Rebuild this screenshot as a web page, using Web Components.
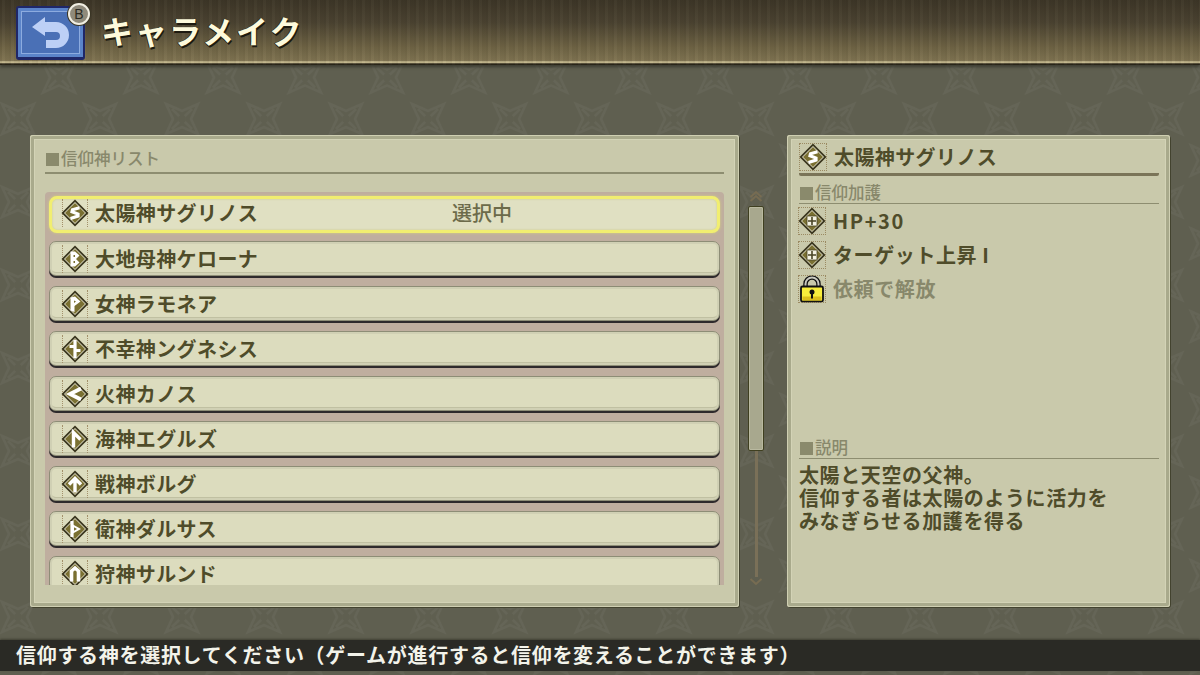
<!DOCTYPE html>
<html lang="ja">
<head>
<meta charset="utf-8">
<title>キャラメイク</title>
<style>
  html, body { margin: 0; width: 1200px; height: 675px; overflow: hidden; }
  body { background: #5f5f50; font-family: "Noto Sans CJK JP", "Noto Sans", sans-serif; }
</style>
</head>
<body>
<game-screen>
  <game-header slot="header">キャラメイク</game-header>

  <god-list slot="list" heading="信仰神リスト">
    <god-row glyph="S" selected>太陽神サグリノス<span slot="status">選択中</span></god-row>
    <god-row glyph="B">大地母神ケローナ</god-row>
    <god-row glyph="P">女神ラモネア</god-row>
    <god-row glyph="X">不幸神ングネシス</god-row>
    <god-row glyph="L">火神カノス</god-row>
    <god-row glyph="R">海神エグルズ</god-row>
    <god-row glyph="U">戦神ボルグ</god-row>
    <god-row glyph="T">衛神ダルサス</god-row>
    <god-row glyph="N">狩神サルンド</god-row>
  </god-list>

  <scroll-rail slot="rail"></scroll-rail>

  <god-detail slot="detail">
    <god-glyph slot="icon" glyph="S" boxed></god-glyph>
    <span slot="name">太陽神サグリノス</span>
    <perk-row slot="perks" glyph="plus" style="letter-spacing:1.6px">HP+30</perk-row>
    <perk-row slot="perks" glyph="plus">ターゲット上昇 I</perk-row>
    <perk-row slot="perks" glyph="lock" locked>依頼で解放</perk-row>
    <span slot="about">太陽と天空の父神。<br>信仰する者は太陽のように活力を<br>みなぎらせる加護を得る</span>
  </god-detail>

  <hint-bar slot="hint">信仰する神を選択してください（ゲームが進行すると信仰を変えることができます）</hint-bar>
</game-screen>

<script>
// glyph strokes inside the diamond, viewBox 0 0 28 28
const GLYPHS = {
  S: '<path d="M18.500 8.800 L11.500 10.800 L11 12.800 L17 15 L17 17 L9.500 19.400" fill="none" stroke="#fff" stroke-width="3.200"/>',
  B: '<path d="M9.500 6.500 L14 6.500 L18.500 10.500 L15 14 L18.500 17.500 L14 21.500 L9.500 21.500 Z" fill="#fff"/><path d="M12.500 11 h1.500 M12.500 17 h1.500" stroke="#7a7032" stroke-width="2"/>',
  P: '<path d="M9.500 7.500 L14 6.500 L19.500 11.500 L13.500 16 L13.500 22 L9.500 20.500 Z" fill="#fff"/><path d="M13 10.500 L15 11.500 L13 13 Z" fill="#7a7032"/>',
  X: '<path d="M14 5 V23 M8.500 11.500 H14 M14 15.500 H19.500" fill="none" stroke="#fff" stroke-width="3.200"/>',
  L: '<path d="M20 8.500 L9 14 L20 19.500" fill="none" stroke="#fff" stroke-width="3.800"/>',
  R: '<path d="M12.500 22.500 V7.500 L19.500 14.500" fill="none" stroke="#fff" stroke-width="3.400"/>',
  U: '<path d="M14 22.500 V8.500 M8 14.500 L14 8.500 L20 14.500" fill="none" stroke="#fff" stroke-width="3.400"/>',
  T: '<path d="M11 6 V22" stroke="#fff" stroke-width="3.200"/><path d="M11 9 L20 14 L11 19 Z" fill="#fff"/><path d="M13 12.300 L16 14 L13 15.700 Z" fill="#7a7032"/>',
  N: '<path d="M10.500 21.500 V11 L14 8 L17.500 11 V21.500" fill="none" stroke="#fff" stroke-width="3.600"/>',
  plus: '<rect x="9" y="9" width="10" height="10" fill="#f4f2e2" stroke="#4a4526" stroke-width=".8"/><path d="M14 10 V18 M10 14 H18" stroke="#4a4526" stroke-width="1.600"/>'
};

class GodGlyph extends HTMLElement {
  connectedCallback() {
    const glyph = this.getAttribute('glyph');
    const art = glyph === 'lock'
      ? `<svg width="24" height="28" viewBox="1 0 24 28">
           <path d="M6.500 13 V9 a6.500 6.500 0 0 1 13 0 V13" fill="none" stroke="#111" stroke-width="4.500"/>
           <path d="M6.500 13 V9 a6.500 6.500 0 0 1 13 0 V13" fill="none" stroke="#c9c9c0" stroke-width="2"/>
           <rect x="2" y="11.500" width="22" height="15" rx="1.500" fill="#f8ee3c" stroke="#111" stroke-width="1.800"/>
           <rect x="3.500" y="21.500" width="19" height="4" fill="#dcc01c"/>
           <circle cx="13" cy="17" r="2.500" fill="#111"/><rect x="12" y="17" width="2" height="6.500" fill="#111"/>
         </svg>`
      : `<svg width="28" height="28" viewBox="0 0 28 28">
           <polygon points="14,0.500 27.500,14 14,27.500 0.500,14" fill="#38341c"/>
           <polygon points="14,3 25,14 14,25 3,14" fill="#e9e7d2"/>
           <polygon points="14,4 24,14 14,24 4,14" fill="#7a7032"/>
           ${GLYPHS[glyph] || ''}
         </svg>`;
    this.attachShadow({ mode: 'open' }).innerHTML = `
      <style>
        :host { display: flex; align-items: center; justify-content: center; width: 26px; height: 26px; flex: none; box-sizing: border-box; }
        :host([boxed]) { outline: 1px dotted #9b8a62; }
        :host([rails]) { border-left: 1px dotted #a3906a; border-right: 1px dotted #a3906a; height: 28px; }
        svg { display: block; flex: none; }
      </style>${art}`;
  }
}

class GameHeader extends HTMLElement {
  constructor() {
    super();
    this.attachShadow({ mode: 'open' }).innerHTML = `
      <style>
        :host { display: flex; align-items: center; height: 65px; box-sizing: border-box; padding: 0 0 0 16px; position: relative;
          background:
            repeating-linear-gradient(90deg, rgba(0,0,0,.05) 0 2px, rgba(255,255,255,.02) 2px 5px, rgba(0,0,0,.03) 5px 9px),
            linear-gradient(#3d3627 0, #4b4331 35%, #6e6344 72%, #7f7351 93%, #c2b68c 95%, #c2b68c 97%, #2a2619 98%);
          box-shadow: 0 2px 3px #3c3c30; }
        .back { position: relative; width: 69px; height: 54px; box-sizing: border-box; flex: none;
          background: #4a70b6; border: 2px solid #1f2768; border-bottom-width: 3px; border-radius: 3px;
          box-shadow: inset 0 0 0 3px #5b84c9, inset 0 0 0 4px #8cabdf; display: flex; align-items: center; justify-content: center; }
        .back svg { display: block; }
        .badge { position: absolute; left: 50px; top: -5px; width: 22px; height: 22px; box-sizing: border-box; border-radius: 50%;
          background: #8f8a7b; border: 2px solid #f1eee2; color: #2c2a22; font: 400 14px/18px "Liberation Sans", sans-serif; text-align: center; box-shadow: 0 0 0 1px #3a3626; }
        h1 { margin: 0 0 5px 16px; font: 700 32px/40px "Noto Sans CJK JP", sans-serif; letter-spacing: 2px; color: #fdfadc; text-shadow: 1px 2px 0 #1d1a10, -1px 0 0 #2a2616; }
      </style>
      <div class="back">
        <svg width="42" height="38" viewBox="29 10 42 38">
          <path d="M44 14 L31 24 L44 33 V29 H55 a4 4 0 0 1 0 8 H45 V45 H55 a13 13 0 0 0 0 -26 H44 Z" fill="#bdd0f6"/>
        </svg>
        <span class="badge">B</span>
      </div>
      <h1><slot></slot></h1>`;
  }
}

class PanelFrame extends HTMLElement {
  constructor() {
    super();
    this.attachShadow({ mode: 'open' }).innerHTML = `
      <style>
        :host { display: flex; flex-direction: column; box-sizing: border-box; height: 472px; position: relative;
          background: #c9c9ab; border-radius: 3px;
          box-shadow: inset 0 0 0 1px #cfcfb2, inset 0 0 0 4px #a9aa8c, inset 0 0 0 5px #d3d3b6, 1px 1px 0 #43432f; }
        ::slotted(*) { flex: none; }
      </style><slot></slot>`;
  }
}

class SectionLabel extends HTMLElement {
  constructor() {
    super();
    this.attachShadow({ mode: 'open' }).innerHTML = `
      <style>
        :host { display: block; box-sizing: border-box; border-bottom: 2px solid #8d8d70; color: #88886b; font: 500 16.500px/20px "Noto Sans CJK JP", sans-serif; white-space: nowrap; }
        i { display: inline-block; width: 13px; height: 13px; margin: 0 2px 0 1px; background: #8a8a6c; vertical-align: -1px; }
      </style><i></i><slot></slot>`;
  }
}

class GodList extends HTMLElement {
  connectedCallback() {
    this.attachShadow({ mode: 'open' }).innerHTML = `
      <style>
        :host { display: block; width: 709px; flex: none; }
        panel-frame { padding: 13px 15px 0 15px; }
        section-label { height: 26px; }
        .scroll { margin-top: 18px; height: 393px; overflow: hidden; background: #bfae9f; border-radius: 4px 4px 0 0;
          display: flex; flex-direction: column; gap: 8px; padding: 4px 4px 0; box-sizing: border-box; }
        ::slotted(god-row) { flex: none; }
      </style>
      <panel-frame>
        <section-label>${this.getAttribute('heading')}</section-label>
        <div class="scroll"><slot></slot></div>
      </panel-frame>`;
  }
}

class GodRow extends HTMLElement {
  connectedCallback() {
    this.attachShadow({ mode: 'open' }).innerHTML = `
      <style>
        :host { display: flex; align-items: center; box-sizing: border-box; height: 35px; width: 671px; margin-bottom: 2px; padding-left: 12px;
          background: #dcdcbe; border: 1px solid #8d8d76; border-radius: 7px;
          box-shadow: inset 0 0 0 2px #d0d0b4, inset 0 -3px 0 #c0c0a2, 0 2px 0 #2e2a2c; color: #4f4c2a; font: 700 20px/26px "Noto Sans CJK JP", sans-serif; }
        :host([selected]) { height: 37px; margin-bottom: 0; border: 3px solid #f1ee70; border-radius: 8px; padding: 0 0 3px 10px; background: #e0e0c2;
          box-shadow: 0 0 3px #d6d37c, inset 0 0 2px #c9c77c; }
        .name { margin-left: 7px; width: 357px; letter-spacing: .4px; flex: none; }
        .status { color: #6c6b4a; font-weight: 500; letter-spacing: 0; }
      </style>
      <god-glyph glyph="${this.getAttribute('glyph')}" rails></god-glyph>
      <span class="name"><slot></slot></span>
      <span class="status"><slot name="status"></slot></span>`;
  }
}

class ScrollRail extends HTMLElement {
  constructor() {
    super();
    this.attachShadow({ mode: 'open' }).innerHTML = `
      <style>
        :host { display: flex; flex-direction: column; align-items: center; flex: none; width: 16px; height: 396px; margin: 55px 23px 0 9px; }
        svg { display: block; flex: none; }
        .thumb { width: 16px; height: 245px; margin-top: 3px; box-sizing: border-box; flex: none; background: #a8a88e; border: 1px solid #3f3f20; border-radius: 2px; box-shadow: inset 0 0 0 1px #b9b9a0; }
        .line { width: 3px; flex: 1; background: #7a7058; }
      </style>
      <svg width="14" height="13" viewBox="0 0 14 13"><path d="M1.500 7 L7 2 L12.500 7 M1.500 11 L7 6 L12.500 11" fill="none" stroke="#776c52" stroke-width="2"/></svg>
      <div class="thumb"></div>
      <div class="line"></div>
      <svg width="14" height="9" viewBox="0 0 14 9"><path d="M1.500 2 L7 7 L12.500 2" fill="none" stroke="#776c52" stroke-width="2"/></svg>`;
  }
}

class PerkRow extends HTMLElement {
  connectedCallback() {
    this.attachShadow({ mode: 'open' }).innerHTML = `
      <style>
        :host { display: flex; align-items: center; gap: 8px; height: 34px; color: #4f4c2a; font: 700 20px/26px "Noto Sans CJK JP", sans-serif; letter-spacing: .6px; }
        :host([locked]) { color: #88886b; }
      </style>
      <god-glyph glyph="${this.getAttribute('glyph')}" boxed></god-glyph>
      <span><slot></slot></span>`;
  }
}

class GodDetail extends HTMLElement {
  constructor() {
    super();
    this.attachShadow({ mode: 'open' }).innerHTML = `
      <style>
        :host { display: block; width: 383px; flex: none; }
        panel-frame { padding: 7px 11px 0 12px; }
        .title { display: flex; align-items: center; gap: 8px; height: 29px; padding: 0 0 2px 1px; border-bottom: 3px solid #7a7458; border-radius: 0 0 2px 2px;
          color: #4f4c2a; font: 700 20px/26px "Noto Sans CJK JP", sans-serif; letter-spacing: .4px; }
        .perks { display: flex; flex-direction: column; margin-top: 0; height: 102px; flex: none; }
        section-label { border-bottom-width: 1px; height: 22px; }
        .gain { margin-top: 6px; }
        .about-h { margin-top: 131px; }
        /* Liberation first so the line boxes stay 23px tall, the kana and kanji fall through to Noto */
        .about { margin-top: 6px; color: #4f4c2a; font: 700 20px/23px "Liberation Sans", "Noto Sans CJK JP", sans-serif; letter-spacing: .6px; }
      </style>
      <panel-frame>
        <div class="title"><slot name="icon"></slot><span><slot name="name"></slot></span></div>
        <section-label class="gain">信仰加護</section-label>
        <div class="perks"><slot name="perks"></slot></div>
        <section-label class="about-h">説明</section-label>
        <div class="about"><slot name="about"></slot></div>
      </panel-frame>`;
  }
}

class HintBar extends HTMLElement {
  constructor() {
    super();
    this.attachShadow({ mode: 'open' }).innerHTML = `
      <style>
        :host { display: block; height: 31px; box-sizing: border-box; padding-left: 16px; background: #2a2a25; color: #f3f3ea;
          font: 700 20px/30px "Noto Sans CJK JP", sans-serif; letter-spacing: .7px; white-space: nowrap; box-shadow: 0 -1px 2px #3f3f33; }
      </style><slot></slot>`;
  }
}

class GameScreen extends HTMLElement {
  constructor() {
    super();
    // one star of the wallpaper, repeated on a staggered 82px lattice
    const star = '<path d="M-16 -15 L0 -8 L16 -15 L9 0 L16 15 L0 8 L-16 15 L-9 0 Z M-10 -10 L10 10 M10 -10 L-10 10" fill="none" stroke="#656557" stroke-width="2.500"/><circle r="4" fill="#5f5f50"/>';
    this.attachShadow({ mode: 'open' }).innerHTML = `
      <style>
        :host { display: block; position: relative; width: 1200px; height: 675px; overflow: hidden; background: #5f5f50; }
        .wall { position: absolute; inset: 0; z-index: 0; }
        .page { position: relative; z-index: 1; display: flex; flex-direction: column; height: 675px; }
        .main { display: flex; align-items: flex-start; height: 575px; flex: none; box-sizing: border-box; padding: 70px 30px 0; }
      </style>
      <svg class="wall" width="1200" height="675">
        <defs>
          <pattern id="stars" x="-23" y="36" width="82" height="83" patternUnits="userSpaceOnUse">
            <g transform="translate(41 0)">${star}</g>
            <g transform="translate(0 41.500)">${star}</g>
            <g transform="translate(82 41.500)">${star}</g>
            <g transform="translate(41 83)">${star}</g>
          </pattern>
        </defs>
        <rect width="1200" height="675" fill="url(#stars)"/>
      </svg>
      <div class="page">
        <slot name="header"></slot>
        <div class="main"><slot name="list"></slot><slot name="rail"></slot><slot name="detail"></slot></div>
        <slot name="hint"></slot>
      </div>`;
  }
}

customElements.define('god-glyph', GodGlyph);
customElements.define('game-header', GameHeader);
customElements.define('panel-frame', PanelFrame);
customElements.define('section-label', SectionLabel);
customElements.define('god-list', GodList);
customElements.define('god-row', GodRow);
customElements.define('scroll-rail', ScrollRail);
customElements.define('perk-row', PerkRow);
customElements.define('god-detail', GodDetail);
customElements.define('hint-bar', HintBar);
customElements.define('game-screen', GameScreen);
</script>
</body>
</html>
